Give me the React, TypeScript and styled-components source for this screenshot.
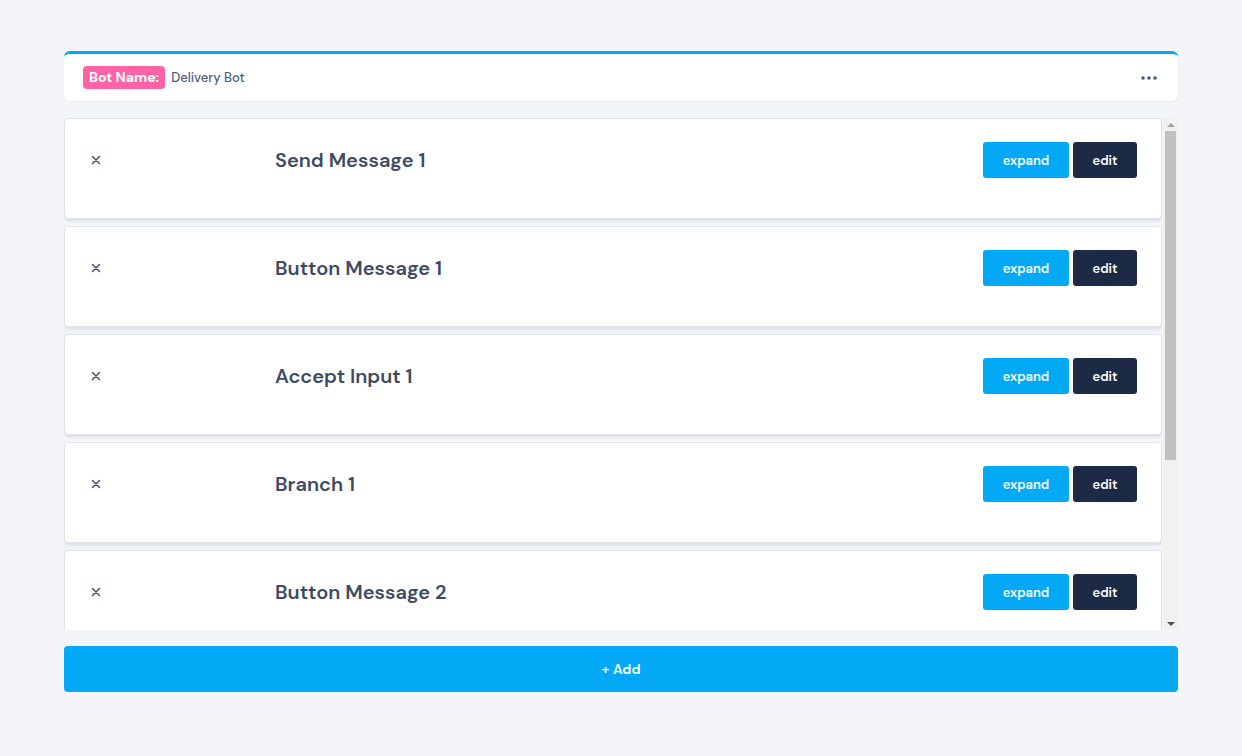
import styled, { createGlobalStyle } from 'styled-components';

const GlobalStyle = createGlobalStyle`
    * {
        box-sizing: border-box;
    }
    body {
        margin: 0;
        background-color: #f4f5f9;
        font-family: "DM Sans", Inter, "Noto Sans", sans-serif;
    }
`

const steps = [
    'Send Message 1',
    'Button Message 1',
    'Accept Input 1',
    'Branch 1',
    'Button Message 2',
    'Send Message 2',
    'Branch 2',
]

const App = () => {
    return (
        <>
            <GlobalStyle />
            <Page>
                <BotHeader>
                    <BotInfo>
                        <Badge>Bot Name:</Badge>
                        <BotName>Delivery Bot</BotName>
                    </BotInfo>
                    <MenuButton aria-label="more">
                        <svg width="16" height="4" viewBox="0 0 16 4">
                            <circle cx="2" cy="2" r="1.8" fill="#4a5a7a" />
                            <circle cx="8" cy="2" r="1.8" fill="#4a5a7a" />
                            <circle cx="14" cy="2" r="1.8" fill="#4a5a7a" />
                        </svg>
                    </MenuButton>
                </BotHeader>

                <Viewport>
                    <StepList>
                        {steps.map((name) => (
                            <StepCard key={name}>
                                <RemoveButton aria-label="remove">
                                    <svg width="10" height="10" viewBox="0 0 10 10">
                                        <path d="M1.5 1.5 L8.5 8.5 M8.5 1.5 L1.5 8.5" stroke="#4a5a7a" strokeWidth="1.6" strokeLinecap="round" />
                                    </svg>
                                </RemoveButton>
                                <StepTitle>{name}</StepTitle>
                                <Actions>
                                    <ActionButton>expand</ActionButton>
                                    <ActionButton $dark>edit</ActionButton>
                                </Actions>
                            </StepCard>
                        ))}
                    </StepList>

                    {/* hand-drawn scrollbar, the native one is hidden */}
                    <ScrollTrack>
                        <ScrollArrow>
                            <svg width="8" height="4" viewBox="0 0 8 4">
                                <path d="M0 4 L4 0 L8 4 Z" fill="#a3a3a3" />
                            </svg>
                        </ScrollArrow>
                        <ScrollThumb />
                        <ScrollArrow>
                            <svg width="8" height="4" viewBox="0 0 8 4">
                                <path d="M0 0 L8 0 L4 4 Z" fill="#505050" />
                            </svg>
                        </ScrollArrow>
                    </ScrollTrack>
                </Viewport>

                <AddButton>+ Add</AddButton>
            </Page>
        </>
    );
}

export default App;

const Page = styled.div`
    padding: 51px 64px 0;
    display: flex;
    flex-direction: column;
`

const BotHeader = styled.header`
    display: flex;
    justify-content: space-between;
    align-items: center;
    height: 50px;
    padding: 0 21px 0 19px;
    background-color: #fff;
    border-top: 3px solid #03a9f4;
    border-radius: 6px;
    box-shadow: 0 1px 2px rgba(30, 40, 70, 0.05);
`

const BotInfo = styled.div`
    display: flex;
    align-items: center;
    gap: 6px;
`

const Badge = styled.span`
    background-color: #ff63a5;
    color: #fff;
    font-size: 14px;
    font-weight: 700;
    line-height: 17px;
    padding: 3px 6px;
    border-radius: 4px;
`

const BotName = styled.span`
    color: #4f5d78;
    font-size: 13px;
    font-weight: 500;
`

const MenuButton = styled.button`
    border: none;
    background: none;
    padding: 0;
    display: flex;
    cursor: pointer;
`

const Viewport = styled.div`
    margin-top: 17px;
    height: 512px;
    display: flex;
    gap: 1px;
`

const StepList = styled.div`
    flex: 1;
    overflow-y: auto;
    scrollbar-width: none;
    &::-webkit-scrollbar {
        display: none;
    }
`

const ScrollTrack = styled.div`
    width: 15px;
    flex-shrink: 0;
    display: flex;
    flex-direction: column;
    background-color: #f1f1f1;
`

const ScrollArrow = styled.div`
    height: 13px;
    display: flex;
    align-items: center;
    justify-content: center;
`

const ScrollThumb = styled.div`
    height: 329px;
    margin: 0 2px auto;
    background-color: #c1c1c1;
`

const StepCard = styled.div`
    display: grid;
    grid-template-columns: 187px 1fr auto;
    align-items: center;
    height: 101px;
    padding: 23px 24px 41px 23px;
    margin-bottom: 7px;
    background-color: #fff;
    border: 1px solid #e1e3ea;
    border-radius: 4px;
    box-shadow: 0 2px 3px rgba(40, 50, 80, 0.12);
`

const RemoveButton = styled.button`
    width: 16px;
    height: 16px;
    border: none;
    background: none;
    padding: 0;
    display: flex;
    align-items: center;
    justify-content: center;
    cursor: pointer;
`

const StepTitle = styled.h3`
    margin: 0;
    color: #3d4a5f;
    font-size: 20px;
    font-weight: 600;
`

const Actions = styled.div`
    display: flex;
    gap: 4px;
`

const ActionButton = styled.button<{ $dark?: boolean }>`
    height: 36px;
    min-width: ${(p) => (p.$dark ? '64px' : '86px')};
    border: none;
    border-radius: 3px;
    background-color: ${(p) => (p.$dark ? '#1c2a45' : '#03a9f4')};
    color: #fff;
    font-family: inherit;
    font-size: 13px;
    font-weight: 600;
    cursor: pointer;
`

const AddButton = styled.button`
    margin-top: 16px;
    height: 46px;
    border: none;
    border-radius: 4px;
    background-color: #03a9f4;
    color: #fff;
    font-family: inherit;
    font-size: 14px;
    font-weight: 600;
    cursor: pointer;
`
